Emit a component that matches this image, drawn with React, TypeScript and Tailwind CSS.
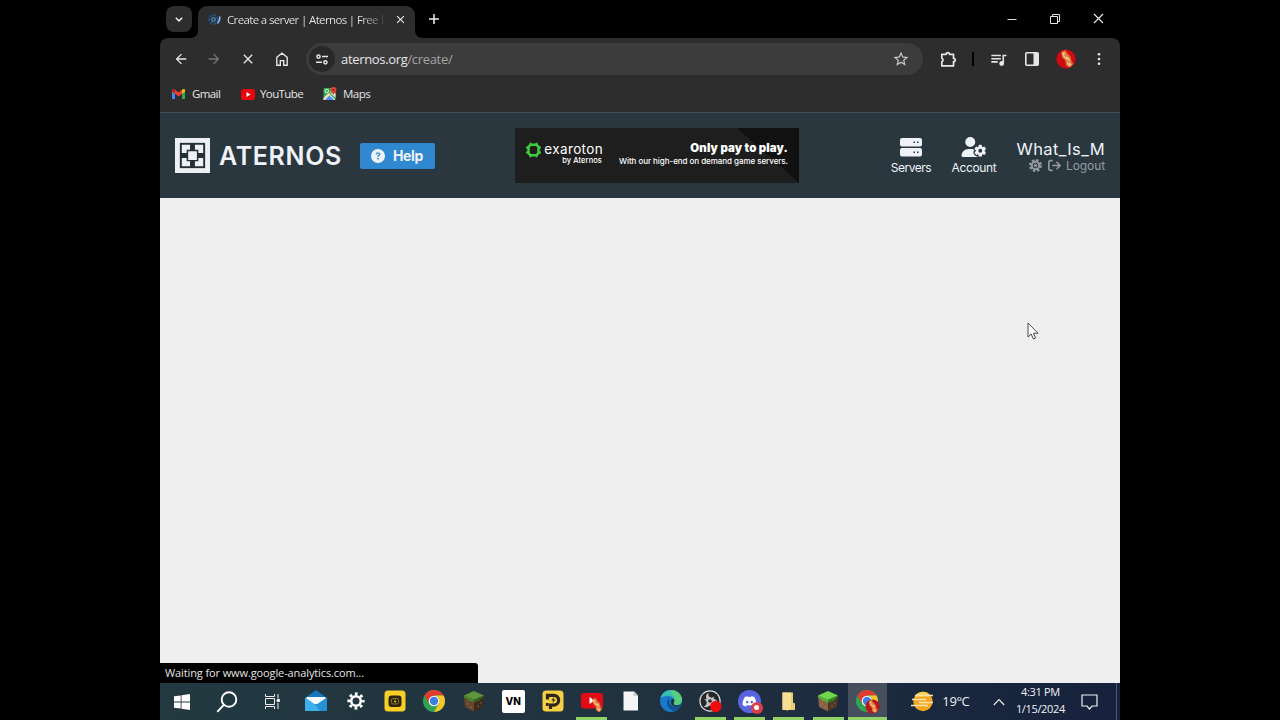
import type { ReactNode } from 'react';
import { FaArrowRightFromBracket, FaCircleQuestion, FaDiscord, FaUserGear } from 'react-icons/fa6';
import { MdArrowBack, MdArrowForward, MdClose, MdQueueMusic, MdStarBorder } from 'react-icons/md';

const ui = "font-['Open_Sans','Noto_Sans',sans-serif]";
const exo = "font-['Inter','Open_Sans',sans-serif]";

export default function App() {
  return (
    <div className={`flex h-[720px] w-[1280px] justify-center overflow-hidden bg-black ${ui}`}>
      <div className="relative flex w-[960px] flex-col">
        <TabStrip />
        <Toolbar />
        <SiteHeader />
        <main className="flex flex-1 flex-col justify-end bg-[#efefef]">
          <div className="h-5 w-[318px] rounded-tr-[3px] bg-black pl-[5px] text-[11px] leading-[20px] tracking-[-0.11px] whitespace-nowrap text-[#e4e4e4]">
            Waiting for www.google-analytics.com...
          </div>
        </main>
        <Taskbar />
        <svg className="absolute top-[322px] left-[867px]" width="12" height="20" viewBox="0 0 12 20">
          <path d="M1 1v14l3.2-3 2.2 5 2.2-1-2.2-4.8H11z" fill="#fff" stroke="#333" strokeWidth="0.9" />
        </svg>
      </div>
    </div>
  );
}

function TabStrip() {
  return (
    <div className="flex h-[38px] items-end bg-black text-[#e8e8e8]">
      <button type="button" className="mb-[6px] ml-[6px] flex h-[26px] w-[26px] items-center justify-center rounded-[8px] bg-[#2d2d2d]">
        <svg width="8" height="5" viewBox="0 0 8 5">
          <path d="M.8.7 4 3.9 7.2.7" fill="none" stroke="#eee" strokeWidth="1.5" />
        </svg>
      </button>
      <Flare className="-mr-px -ml-[2px]" />
      <div className="flex h-8 w-[217px] items-center rounded-t-[9px] bg-[#2d2d2d] pr-[8px] pb-[5px] pl-[10px]">
        <svg width="13" height="13" viewBox="0 0 13 13" fill="none">
          <circle cx="5.5" cy="6.5" r="4.4" stroke="#284f7a" strokeWidth="2" strokeDasharray="3 1" />
          <circle cx="5.5" cy="6.5" r="1.8" stroke="#4c7aa5" strokeWidth="1.4" />
          <path d="M11.600 3.500c.5 2.500-.2 5-2.200 7" stroke="#8cbcf0" strokeWidth="1.600" />
        </svg>
        <span className="ml-[6px] shrink-0 bg-gradient-to-r from-[#e8e8e8] from-88% to-[#777] bg-clip-text text-[11.500px] leading-4 tracking-[-0.640px] whitespace-nowrap text-transparent">
          Create a server | Aternos | Free
        </span>
        <span className="ml-[4px] h-[9px] w-px bg-[#4a4a4a]" />
        <MdClose className="ml-auto h-[13px] w-[13px] shrink-0 text-[#eee]" />
      </div>
      <Flare className="-ml-px -scale-x-100" />
      <svg className="mb-[14px] ml-[6px]" width="10" height="10" viewBox="0 0 10 10">
        <path d="M5 0v10M0 5h10" stroke="#eee" strokeWidth="1.5" />
      </svg>
      <div className="mr-[16px] mb-[14px] ml-auto flex items-center gap-[33px]">
        <svg width="10" height="10" viewBox="0 0 10 10"><path d="M.5 5.500h9" stroke="#ddd" /></svg>
        <svg width="10" height="10" viewBox="0 0 10 10" fill="none" stroke="#e6e6e6">
          <path d="M.5 2.500h7v7h-7zM2.500 2.500V.5h7v7h-2" />
        </svg>
        <svg width="11" height="11" viewBox="0 0 11 11"><path d="m1 1 9 9M10 1l-9 9" stroke="#eee" strokeWidth="1.100" /></svg>
      </div>
    </div>
  );
}

function Flare({ className }: { className: string }) {
  return (
    <svg className={className} width="9" height="8" viewBox="0 0 9 8">
      <path d="M0 8c5 0 8-3 8-8h1v8z" fill="#2d2d2d" />
    </svg>
  );
}

function Toolbar() {
  return (
    <div className="bg-black">
      <div className="h-[75px] rounded-t-[8px] border-b border-[#43505b] bg-[#2d2d2d] text-[#e6e6e6]">
        <div className="flex h-[42px] items-center pl-[13px]">
          <MdArrowBack className="h-4 w-4" />
          <MdArrowForward className="ml-[17px] h-4 w-4 text-[#777]" />
          <MdClose className="ml-[18px] h-[16px] w-[16px]" />
          <svg className="ml-[20px]" width="12" height="14" viewBox="0 0 12 14" fill="none">
            <path d="M.8 13.200V5.300L6 1.100l5.200 4.200v7.900H7.700V8.600H4.300v4.600z" stroke="#e6e6e6" strokeWidth="1.400" />
          </svg>
          <div className="ml-[18px] flex h-8 w-[617px] items-center rounded-full bg-[#3c3c3c] pr-[13px] pl-[3px]">
            <span className="flex h-[26px] w-[26px] items-center justify-center rounded-full bg-[#292929]">
              <svg width="12" height="11" viewBox="0 0 12 11" fill="none" stroke="#e6e6e6" strokeWidth="1.500">
                <circle cx="2.500" cy="2.600" r="1.600" />
                <path d="M6 2.600h6M0 8.300h6" />
                <circle cx="9.400" cy="8.300" r="1.600" />
              </svg>
            </span>
            <span className="ml-[6px] text-[13px] leading-5 tracking-[-0.330px]">
              aternos.org<span className="text-[#a5a5a5]">/create/</span>
            </span>
            <MdStarBorder className="ml-auto h-[18px] w-[18px] text-[#c9c9c9]" />
          </div>
          <svg className="ml-[17px]" width="17" height="17" viewBox="0 0 17 17">
            <path d="M1.800 3.300h4.300a1.700 1.700 0 0 1 3.400 0h4v4a1.700 1.700 0 0 1 0 3.400v4.200H1.800v-4a2 2 0 0 0 0-3.700z" fill="none" stroke="#e6e6e6" strokeWidth="1.700" strokeLinejoin="round" />
          </svg>
          <span className="ml-[15px] h-[14px] w-[2px] bg-black" />
          <MdQueueMusic className="ml-[15px] h-[19px] w-[19px]" />
          <svg className="ml-[17px]" width="14" height="14" viewBox="0 0 14 14">
            <rect x=".8" y=".8" width="12.400" height="12.400" rx="1" fill="none" stroke="#e6e6e6" strokeWidth="1.600" />
            <path d="M8.500 1h5v12h-5z" fill="#e6e6e6" />
          </svg>
          <svg className="ml-[17px]" width="20" height="20" viewBox="0 0 20 20">
            <circle cx="10" cy="10" r="9.600" fill="#cf0b12" />
            <Bacon />
          </svg>
          <svg className="ml-[21px]" width="4" height="14" viewBox="0 0 4 14" fill="#e6e6e6">
            <circle cx="2" cy="2.200" r="1.300" /><circle cx="2" cy="7" r="1.300" /><circle cx="2" cy="11.800" r="1.300" />
          </svg>
        </div>
        <div className="flex h-[28px] items-center pl-[12px] text-[11.500px]">
          <svg width="13" height="10" viewBox="0 0 13 10">
            <path d="M0 1.500V10h3V4z" fill="#4285f4" />
            <path d="M10 4v6h3V1.500z" fill="#34a853" />
            <path d="M0 1.500C0 0 1.600-.4 3 .8L6.500 3.600 10 .8v4L6.500 7.500 3 4.800z" fill="#ea4335" />
            <path d="M10 .8c1.500-1.200 3-.8 3 .7v1.300l-3 2z" fill="#fbbc04" />
            <path d="M0 1.500C0 .6.700 0 1.500.1L3 .8v4L0 2.800z" fill="#b92820" />
          </svg>
          <span className="ml-[7px] w-[29px] tracking-[-0.600px]">Gmail</span>
          <svg className="ml-[20px]" width="14" height="11" viewBox="0 0 14 11">
            <rect width="14" height="11" rx="2.500" fill="#e6060c" /><path d="m5.500 3 4 2.500-4 2.500z" fill="#fff" />
          </svg>
          <span className="ml-[5px] w-[43px] tracking-[-0.600px]">YouTube</span>
          <svg className="ml-[20px]" width="14" height="14" viewBox="0 0 14 14">
            <rect x=".5" y="1" width="12" height="12" rx="1" fill="#35a853" />
            <path d="m.5 11 5-5 7 7h-12z" fill="#e8ecee" />
            <path d="m.5 11 10-10h2v3l-9 9h-3z" fill="#f2d354" opacity=".4" />
            <path d="m2 13 4.500-4.500L11 13z" fill="#4a8cf5" />
            <path d="M8 6.500 12.500 11V6z" fill="#e8ecee" />
            <circle cx="3.800" cy="4" r="1.700" fill="none" stroke="#e7f1e8" />
            <path d="M10.500 0a3 3 0 0 1 3 3c0 2-2 2.600-3 5-1-2.400-3-3-3-5a3 3 0 0 1 3-3z" fill="#e04537" />
            <circle cx="10.500" cy="3" r="1.100" fill="#8e1713" />
          </svg>
          <span className="ml-[6px] tracking-[-0.500px]">Maps</span>
        </div>
      </div>
    </div>
  );
}

// Little diagonal strip used on the avatar and on the badge icons.
function Bacon() {
  return (
    <g>
      <path d="m5.500 2.500 4-1.500 2 3.500 2.800 2.500 1 4 2 4-3.500 3.500-4-2-.5-5-3.300-3z" fill="#dc6a33" />
      <path d="m7 3.500 2 4 3 2.500.6 4.300 2 2.500" fill="none" stroke="#f0bd80" strokeWidth="3" />
      <path d="m8.500 5.500 1.700 2.300M11.500 11l1.500 3" fill="none" stroke="#c5522a" strokeWidth="1" />
    </g>
  );
}

function SiteHeader() {
  return (
    <header className={`flex h-[85px] items-center bg-[#2b373f] pl-[15px] text-[#eff3f7] ${exo}`}>
      <svg width="35" height="35" viewBox="0 0 36 36">
        <rect width="36" height="36" fill="#eceff4" />
        <path d="M5 5h26v26H5z" fill="#232e35" />
        <path d="M7 7h8.500v5H12v3.500H7zM20.500 7H29v8.500h-5V12h-3.500zM7 20.500h5V24h3.500v5H7zM24 20.500h5V29h-8.500v-5H24zM13.500 13.500h9v9h-9z" fill="#eceff4" />
      </svg>
      <span className="ml-[9px] w-[123px] text-[25px] leading-9 font-semibold tracking-[0.650px]">ATERNOS</span>
      <button type="button" className="ml-[18px] flex h-[26px] w-[75px] items-center rounded-[2px] bg-[#3088d1] pl-[11px]">
        <FaCircleQuestion className="h-[14px] w-[14px]" />
        <span className="ml-[8px] text-[14px] font-bold tracking-[-0.400px]">Help</span>
      </button>
      <Banner />
      <a className="ml-[91px] flex w-[42px] flex-col items-center pt-[2px]">
        <svg width="22" height="20" viewBox="0 0 22 20">
          <rect x="0" y="1" width="22" height="8.500" rx="2" fill="#eff3f7" />
          <rect x="0" y="11" width="22" height="8.500" rx="2" fill="#eff3f7" />
          <path d="M13.500 4.500H15V6h-1.500zM17 4.500h1.500V6H17zM13.500 14.500H15V16h-1.500zM17 14.500h1.500V16H17z" fill="#2b373f" />
        </svg>
        <span className="mt-[3px] text-[12px] leading-4 tracking-[-0.500px]">Servers</span>
      </a>
      <a className="ml-[18px] flex w-[48px] flex-col items-center pt-[2px]">
        <FaUserGear className="h-[20px] w-[26px]" />
        <span className="mt-[3px] text-[12px] leading-4 tracking-[-0.350px]">Account</span>
      </a>
      <div className="ml-[18px] flex w-[89px] flex-col items-end pt-px">
        <span className="text-[16.500px] leading-[18px] tracking-[0.400px]">What_Is_M</span>
        <div className="flex items-center text-[12px] leading-[15px] text-[#949b9f]">
          <svg width="13" height="13" viewBox="0 0 13 13" fill="none" stroke="#949b9f">
            <circle cx="6.500" cy="6.500" r="5.300" strokeWidth="2.400" strokeDasharray="2.400 1.763" />
            <circle cx="6.500" cy="6.500" r="3.700" strokeWidth="2" />
            <circle cx="6.500" cy="6.500" r="1.300" fill="#949b9f" />
          </svg>
          <FaArrowRightFromBracket className="ml-[6px] h-[13px] w-[13px]" />
          <span className="ml-[5px] tracking-[-0.100px]">Logout</span>
        </div>
      </div>
    </header>
  );
}

function Banner() {
  return (
    <div className="ml-[80px] flex h-[55px] w-[284px] justify-between bg-[#1e1e1e] bg-[linear-gradient(to_top_right,transparent_50%,#111_50%)] bg-[length:62px_55px] bg-right bg-no-repeat pr-[11px] pl-[11px] text-white">
      <div className="flex pt-[13px]">
        <svg className="mt-px" width="15" height="16" viewBox="0 0 15 16">
          <path d="M4.500 2.800h6l2 2.200v6l-2 2.200h-6l-2-2.200V5z" fill="none" stroke="#3fca3d" strokeWidth="2.600" />
          <path d="M4.500.7v3M10.500.7v3M4.500 12.300v3M10.500 12.300v3M0 5.500h3M0 10.500h3M12 5.500h3M12 10.500h3" stroke="#3fca3d" strokeWidth="2" />
        </svg>
        <div className="ml-[2px] flex w-[60px] flex-col items-end whitespace-nowrap">
          <span className="text-[13.500px] leading-[16px] tracking-[0.350px]">exaroton</span>
          <span className="mr-px text-[7.500px] leading-[8px] font-medium tracking-[0.080px]">by Aternos</span>
        </div>
      </div>
      <div className="flex flex-col items-end pt-[12px] whitespace-nowrap">
        <span className="text-[11.500px] leading-4 font-black tracking-[0.100px]">Only pay to play.</span>
        <span className="text-[8px] leading-[11px] font-medium tracking-[-0.050px]">With our high-end on demand game servers.</span>
      </div>
    </div>
  );
}

function TaskItem({ children, open, active }: { children: ReactNode; open?: boolean; active?: boolean }) {
  return (
    <div className={`flex h-full w-[39.400px] shrink-0 flex-col items-center justify-between ${active ? 'bg-[#454f5d]' : ''}`}>
      <div className="flex h-[34px] items-center pt-[2px]">{children}</div>
      <span className={`h-[3px] shrink-0 ${active ? 'w-full' : 'w-[31px]'} ${open || active ? 'bg-[#91d267]' : ''}`} />
    </div>
  );
}

function ChromeLogo() {
  return (
    <g>
      <circle cx="12" cy="12" r="11" fill="#2fa451" />
      <path d="M12 1a11 11 0 0 1 9.500 5.500H12L7.200 14.800 2.500 6.500A11 11 0 0 1 12 1z" fill="#df3b30" />
      <path d="M21.500 6.500A11 11 0 0 1 12 23l4.800-8.200L17 9l-4-2.500z" fill="#f8c725" />
      <circle cx="12" cy="12" r="5.300" fill="#fff" /><circle cx="12" cy="12" r="4.200" fill="#3d7ee3" />
    </g>
  );
}

function GrassBlock({ bright }: { bright?: boolean }) {
  return (
    <svg width="22" height="22" viewBox="0 0 22 22">
      <path d="M1 5.500 11 10v11.500L2 17z" fill={bright ? '#8b6046' : '#68452e'} />
      <path d="M21 5.500 11 10v11.500L20 17z" fill={bright ? '#4e3727' : '#3f2a1c'} />
      <path d="M11 1 21 5.500 11 10 1 5.500z" fill={bright ? '#70d64b' : '#5c963a'} />
      <path d="m1 5.500 10 4.500v3l-2-2v1.500l-2-2-2 1v-2.500l-2 .5V8L1.200 8z" fill={bright ? '#55b53a' : '#4b7f30'} />
      <path d="M21 5.500 11 10v3l2-1.500V13l2-2.500 2 1V9l2 .5V8l2-1z" fill={bright ? '#338625' : '#355d23'} />
      <path d="M4 13h2v2H4zM7 16h2v2H7zM14 15h2v2h-2zM17 12h1.500v2H17z" fill="#ad8060" opacity=".35" />
    </svg>
  );
}

function Taskbar() {
  return (
    <footer className="flex h-[37px] shrink-0 items-center overflow-hidden bg-gradient-to-r from-[#223940] via-[#21323f] to-[#17213d] text-[#f0f3f5]">
      <div className="flex w-[44px] justify-center">
        <svg width="16" height="16" viewBox="0 0 16 16" fill="#fff">
          <path d="M0 2.300 6.700 1.400v6.200H0zM7.500 1.300 16 0v7.600H7.500zM0 8.400h6.700v6.200L0 13.700zM7.500 8.400H16V16l-8.500-1.300z" />
        </svg>
      </div>
      <div className="flex w-[46px] justify-center">
        <svg width="22" height="22" viewBox="0 0 22 22" fill="none" stroke="#fff" strokeWidth="1.900">
          <circle cx="13" cy="8.500" r="7.300" /><path d="m7.800 13.800-6.500 7" />
        </svg>
      </div>
      <div className="mr-[2.500px] flex w-[44px] justify-center">
        <svg width="15" height="15" viewBox="0 0 15 15" fill="none" stroke="#eee">
          <path d="M.5 0v2.500h9V0M.5 15v-2.500h9V15M.5 4.500h9v6h-9zM13 0v4.500M13 9v6" /><path d="M12 5.500h2.500v2H12z" fill="#eee" />
        </svg>
      </div>
      <TaskItem>
        <svg width="24" height="22" viewBox="0 0 24 22">
          <path d="M1 8 12 0l11 8v13H1z" fill="#1676bc" />
          <path d="M2.500 7h19v7h-19z" fill="#f5fbff" />
          <path d="m1 7.500 11 7.500L23 7.500V21H1z" fill="#3eaeed" />
          <path d="m12 15 11-7.500V21H16l-4-6z" fill="#278fd3" />
        </svg>
      </TaskItem>
      <TaskItem>
        <svg width="18" height="18" viewBox="0 0 18 18" fill="none" stroke="#fff">
          <circle cx="9" cy="9" r="4.800" strokeWidth="2.600" />
          <circle cx="9" cy="9" r="7.200" strokeWidth="2.800" strokeDasharray="2.800 2.855" strokeDashoffset="1.400" />
        </svg>
      </TaskItem>
      <TaskItem>
        <svg width="22" height="22" viewBox="0 0 22 22">
          <rect x=".5" y=".5" width="21" height="21" rx="3.500" fill="#f7cf27" />
          <rect x="4.500" y="5.500" width="13" height="11.500" rx="3" fill="#2b2413" /><rect x="7.500" y="8.500" width="7" height="5.500" rx="1.500" fill="none" stroke="#8b7320" strokeWidth="1" />
          <path d="m11.500 9.500-1.500 2h2l-.8 1.500" fill="none" stroke="#f7cf27" strokeWidth=".7" />
        </svg>
      </TaskItem>
      <TaskItem><svg width="24" height="24" viewBox="0 0 24 24"><ChromeLogo /></svg></TaskItem>
      <TaskItem><GrassBlock /></TaskItem>
      <TaskItem>
        <span className="flex h-[23px] w-[23px] items-center justify-center rounded-[2px] bg-white font-['Inter',sans-serif] text-[10px] font-extrabold text-black">VN</span>
      </TaskItem>
      <TaskItem>
        <svg width="22" height="22" viewBox="0 0 22 22">
          <rect x=".5" y=".5" width="21" height="21" rx="3.500" fill="#f3d044" />
          <path d="M5.500 9.500V5.300h6.200a4.900 4.900 0 0 1 0 9.800H8.500V19" fill="none" stroke="#302719" strokeWidth="3.200" />
          <path d="M3.900 13h2.800v3H3.900z" fill="#302719" /><path d="m12 7-2.800 3.500h2l-.7 2.800 3-3.700h-2z" fill="#302719" />
        </svg>
      </TaskItem>
      <TaskItem open>
        <svg width="24" height="24" viewBox="0 0 24 24">
          <rect x="1" y="4" width="22" height="15.500" rx="3" fill="#e20a15" /><path d="m9.500 8 5 3.500-5 3.500z" fill="#fff" />
          <g transform="translate(8 8) scale(.82)"><Bacon /></g>
        </svg>
      </TaskItem>
      <TaskItem>
        <svg width="16" height="20" viewBox="0 0 16 20"><path d="M.5.500h10.500l4 4v15H.5z" fill="#f5f5f5" /><path d="M11 .5v4h4" fill="#ccd0d2" stroke="#b4babd" strokeWidth=".7" /></svg>
      </TaskItem>
      <TaskItem>
        <svg width="24" height="24" viewBox="0 0 24 24">
          <circle cx="12" cy="12" r="11" fill="#1a78c8" />
          <path d="M1.500 9C3 3.500 7.500 1 12 1c6.500 0 11 5 11 9.500 0 3.500-2.500 5.500-5.500 5.500-2.500 0-3.500-1-2.500-2.500C16.500 10.500 13.500 7 9 7c-4 0-6.500 1-7.500 2z" fill="#35bfb2" />
          <path d="M13.500 1.200C19.500 2 23 6.500 23 10.500c0 3.500-2.500 5.500-5.500 5.500-2.500 0-3.500-1-2.500-2.500 2-3 .500-8-4-10z" fill="#65d36a" opacity=".75" />
          <path d="M10 9.500c-4 3-2 11 5.500 12.500 3-.8 5-2.500 6.500-5-5 2.500-12.500 1-12-7.500z" fill="#135291" />
          <path d="M14.600 10c1 1.500.8 2.800.2 3.700-.8 1.500.5 2.800 3.200 2.800 2 0 3.800-.8 4.500-1.500L22 16.500c-4.500 3-11 .5-10-5 .5-1.300 1.800-2 2.600-1.500z" fill="#21333f" />
        </svg>
      </TaskItem>
      <TaskItem open>
        <svg width="24" height="24" viewBox="0 0 24 24">
          <circle cx="12" cy="12" r="10.700" fill="#d8d8d8" />
          <circle cx="12" cy="12" r="9.500" fill="#25262a" />
          <g fill="#c4c4c4">
            <path d="M10.500 3.800C6.500 6 7.500 11.800 12 12c3-.3 4.500-2.500 4-4.500-1.500 2.500-6.500 1-5.500-3.700z" />
            <path d="M10.500 3.800C6.500 6 7.500 11.800 12 12c3-.3 4.500-2.500 4-4.500-1.500 2.500-6.500 1-5.500-3.700z" transform="rotate(120 12 12)" />
            <path d="M10.500 3.800C6.500 6 7.500 11.800 12 12c3-.3 4.500-2.500 4-4.500-1.500 2.500-6.500 1-5.500-3.700z" transform="rotate(240 12 12)" />
          </g>
          <circle cx="12" cy="12" r="1.800" fill="#25262a" />
          <circle cx="17.800" cy="17.500" r="5.700" fill="#f10b0c" />
        </svg>
      </TaskItem>
      <TaskItem open>
        <span className="relative flex h-[23px] w-[23px] items-center justify-center rounded-full bg-[#5865df]">
          <FaDiscord className="h-[15px] w-[15px] text-white" />
          <span className="absolute -right-[2px] -bottom-px flex h-[12px] w-[12px] items-center justify-center rounded-full bg-[#da3f4a]">
            <span className="h-[5px] w-[5px] rounded-full bg-white" />
          </span>
        </span>
      </TaskItem>
      <TaskItem open>
        <svg width="16" height="20" viewBox="0 0 16 20"><path d="M1.500 1.500H12v10l2 1V19H1.500z" fill="#eacb71" /><path d="M1.500 1.500H10V18l-3.500 1.500-5-1z" fill="#f8df94" /></svg>
      </TaskItem>
      <TaskItem open><GrassBlock bright /></TaskItem>
      <TaskItem active>
        <svg width="25" height="25" viewBox="0 0 25 25">
          <ChromeLogo />
          <circle cx="17.500" cy="17.500" r="7" fill="#b7161a" />
          <g transform="translate(9.800 10) scale(.75)"><Bacon /></g>
        </svg>
      </TaskItem>
      <svg className="ml-[24px]" width="23" height="21" viewBox="0 0 23 21">
        <circle cx="12" cy="10.500" r="9.700" fill="#f5a51f" />
        <path d="M3.500 5.700A9.700 9.700 0 0 1 20 5z" fill="#ffd34c" />
        <path d="M4 4.500h18M1 8.500h14M8 11.500h14M0 14.500h17" stroke="#f7e3b5" strokeWidth="1.300" />
      </svg>
      <span className="ml-[8px] w-[29px] text-[13px] tracking-[-0.400px] whitespace-nowrap">19°C</span>
      <svg className="ml-[22px]" width="12" height="8" viewBox="0 0 12 8"><path d="m.8 7 5.200-5.500L11.200 7" fill="none" stroke="#eee" strokeWidth="1.100" /></svg>
      <div className="mb-[2px] ml-[10px] flex w-[50px] flex-col items-center text-[11px] leading-[16.500px] tracking-[-0.350px] whitespace-nowrap">
        <span>4:31 PM</span>
        <span>1/15/2024</span>
      </div>
      <svg className="ml-[16px]" width="17" height="16" viewBox="0 0 17 16"><path d="M1 1h15v11h-5l-2.500 3L6 12H1z" fill="none" stroke="#eee" strokeWidth="1.200" /></svg>
      <span className="ml-auto mr-[3px] h-full w-px bg-[#4b5870]" />
    </footer>
  );
}
